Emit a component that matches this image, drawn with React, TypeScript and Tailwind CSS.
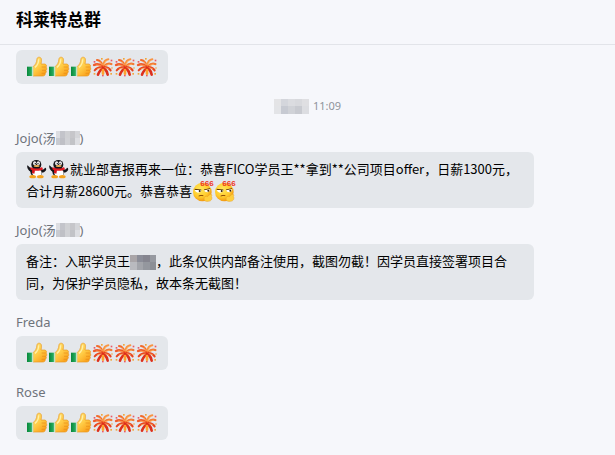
import type { ReactNode } from "react";

const icon = "inline-block size-[22px] align-top";

function ThumbsUp() {
  return (
    <svg viewBox="0 0 66 66" className={icon} role="img" aria-label="赞">
      <defs>
        <linearGradient id="hand" x1="0" y1="0" x2="0.7" y2="1">
          <stop offset="0" stopColor="#ffe27a" />
          <stop offset="0.55" stopColor="#ffcb45" />
          <stop offset="1" stopColor="#fa9f1a" />
        </linearGradient>
        <linearGradient id="cuff" x1="0" y1="0" x2="1" y2="0">
          <stop offset="0" stopColor="#07883a" />
          <stop offset="0.7" stopColor="#25a95d" />
          <stop offset="1" stopColor="#6fcb95" />
        </linearGradient>
      </defs>
      <path d="M21 32 C27 28 32 21 33 8 C34 2 45 2 46 9 C47 15 46 20 45 24 L56 24 C62 25 63 31 60 33 C63 36 63 41 60 43 C62 47 61 50 58 52 C58 57 56 60 50 60 L21 60 Z" fill="url(#hand)" stroke="#e8981f" strokeWidth="2" />
      <path d="M47 33 H59 M48 43 H59 M47 52 H57" stroke="#e58d18" strokeWidth="2" fill="none" />
      <path d="M38 10 C38 21 34 29 27 34" stroke="#fff0a8" strokeWidth="4" fill="none" />
      <rect x="3" y="32" width="17" height="28" fill="url(#cuff)" />
      <rect x="19" y="32" width="3" height="28" fill="#d5efd9" />
    </svg>
  );
}

function Firework() {
  return (
    <svg viewBox="0 0 66 66" className={icon} role="img" aria-label="烟花">
      <g fill="none" strokeLinecap="round">
        <path d="M32 30 C29 19 24 13 15 12" stroke="#f26a2a" strokeWidth="6" />
        <path d="M33 29 C35 17 41 11 49 10" stroke="#f99443" strokeWidth="6" />
        <path d="M31 31 C22 24 14 23 6 27" stroke="#ef5a2a" strokeWidth="7" />
        <path d="M36 31 C43 23 50 21 58 24" stroke="#f47a34" strokeWidth="7" />
        <path d="M30 33 C20 33 13 37 8 43" stroke="#e8461f" strokeWidth="6" />
        <path d="M37 33 C46 33 52 37 56 43" stroke="#e8461f" strokeWidth="6" />
        <path d="M31 36 C25 43 20 49 18 56" stroke="#dd2f1c" strokeWidth="8" />
        <path d="M36 36 C42 42 46 49 47 56" stroke="#dd2f1c" strokeWidth="8" />
        <path d="M33 42 V53" stroke="#ffa12e" strokeWidth="8" />
        <path d="M30 26 L24 17 M36 25 L43 15 M27 30 L14 27 M40 29 L52 25 M28 36 L16 39 M39 35 L49 38" stroke="#ffbd6a" strokeWidth="2" />
      </g>
      <g fill="#ea5868">
        <rect x="5" y="15" width="5" height="5" />
        <rect x="56" y="11" width="5" height="5" />
        <rect x="30" y="57" width="5" height="4" />
      </g>
      <g fill="#f3a63a">
        <rect x="27" y="6" width="5" height="5" />
        <rect x="58" y="34" width="4" height="4" />
        <rect x="5" y="51" width="5" height="5" />
        <rect x="55" y="51" width="5" height="5" />
      </g>
    </svg>
  );
}

function Penguin() {
  return (
    <svg viewBox="0 0 66 66" className={icon} role="img" aria-label="企鹅">
      <path d="M16 30 C9 29 7 23 4 22 C2 29 7 38 15 42 Z" fill="#15151a" />
      <path d="M45 34 C52 36 55 33 57 29 C61 29 62 35 59 38 C55 43 49 44 45 43 Z" fill="#15151a" />
      <ellipse cx="31" cy="41" rx="18" ry="16" fill="#15151a" />
      <ellipse cx="33" cy="45" rx="14" ry="12" fill="#fff" />
      <ellipse cx="20" cy="56" rx="10" ry="5" fill="#f5a21c" />
      <ellipse cx="43" cy="56" rx="10" ry="5" fill="#f5a21c" />
      <ellipse cx="31" cy="20" rx="15" ry="14" fill="#15151a" />
      <ellipse cx="26" cy="16" rx="5" ry="6" fill="#e9e9ec" />
      <ellipse cx="37" cy="16" rx="5" ry="6" fill="#e9e9ec" />
      <circle cx="28" cy="17" r="2" fill="#111" />
      <circle cx="36" cy="17" r="2" fill="#111" />
      <ellipse cx="32" cy="24" rx="9" ry="3" fill="#f0b45a" />
      <path d="M14 27 C24 33 40 33 48 27 L51 34 C42 40 23 40 13 34 Z" fill="#e31b23" />
      <path d="M18 36 L27 37 L25 47 L18 45 Z" fill="#d3141c" />
    </svg>
  );
}

function TripleSix() {
  return (
    <svg viewBox="0 0 66 66" className={icon} role="img" aria-label="666">
      <defs>
        <radialGradient id="face" cx="0.4" cy="0.35" r="0.7">
          <stop offset="0" stopColor="#ffe95e" />
          <stop offset="0.6" stopColor="#ffcb2c" />
          <stop offset="1" stopColor="#ee8c0f" />
        </radialGradient>
      </defs>
      <circle cx="31" cy="36" r="28" fill="url(#face)" />
      <path d="M8 28 L28 30 M36 30 L54 26" stroke="#5b3307" strokeWidth="3" />
      <path d="M8 30 H28 Q26 38 18 38 Q10 37 8 30 Z M36 31 L54 28 Q54 36 46 37 Q38 37 36 31 Z" fill="#fff" />
      <circle cx="23" cy="33" r="3" fill="#3b2206" />
      <circle cx="49" cy="32" r="3" fill="#3b2206" />
      <path d="M20 48 Q27 45 34 47" stroke="#8e4b08" strokeWidth="3" fill="none" />
      <path d="M36 57 C36 50 41 47 46 50 L54 43 C59 41 61 46 58 49 C62 54 59 64 49 64 C41 65 36 62 36 57 Z" fill="#ffcf3c" stroke="#e9a024" strokeWidth="1.5" />
      <text x="25" y="18" fontFamily="Liberation Sans, sans-serif" fontSize="24" fontWeight="700" fill="#ee3524">666</text>
    </svg>
  );
}

function Mosaic({ colors, className }: { colors: string[]; className: string }) {
  return (
    <span aria-hidden="true" className={`inline-grid grid-rows-2 overflow-hidden ${className}`}>
      {colors.map((color, i) => (
        <span key={i} style={{ backgroundColor: color }} />
      ))}
    </span>
  );
}

const nameMosaic = ["#dcdde1", "#c3c4ca", "#cfd0d3", "#c6c6ca", "#d4d5d9", "#c9cbd1", "#bfc0c6", "#d0d1d5", "#c2c3c7", "#dddee2"];
const timeMosaic = ["#e4e4e6", "#d4d6dc", "#dbdce0", "#d8d9dd", "#dfdfe2", "#e3e4e7", "#c7cad2", "#d0d2d7", "#c8cad0", "#dcdde1"];
const wordMosaic = ["#a9a5a8", "#8b8d98", "#85858f", "#9699a0", "#b9babf", "#a2a4aa", "#94979e", "#8c8f96"];

function Message({ name, masked, children }: { name?: string; masked?: boolean; children: ReactNode }) {
  return (
    <article className="flex flex-col items-start">
      {name && (
        <h2 className="mb-1 flex h-5 items-center text-[13px] leading-5 text-[#6f747b]">
          {name}
          {masked && (
            <>
              <Mosaic colors={nameMosaic} className="h-[14px] w-6 grid-cols-5" />)
            </>
          )}
        </h2>
      )}
      <div className="max-w-[518px] rounded-md bg-[#e4e7eb] px-[10px] py-[6px] font-['Noto_Sans_CJK_SC',sans-serif] text-[13px] leading-[22px] text-black">
        {children}
      </div>
    </article>
  );
}

function Cheer() {
  return (
    <p className="flex w-[132px]">
      <ThumbsUp />
      <ThumbsUp />
      <ThumbsUp />
      <Firework />
      <Firework />
      <Firework />
    </p>
  );
}

export default function App() {
  return (
    <div className="min-h-screen bg-[#f6f7fb] font-['Noto_Sans','Noto_Sans_CJK_SC',sans-serif]">
      <header className="flex h-[45px] items-center border-b border-[#e2e4e9] px-4 pb-1">
        <h1 className="text-[17px] leading-6 font-bold text-black">科莱特总群</h1>
      </header>
      <main className="flex flex-col gap-3 px-4 pt-[5px] pb-[15px]">
        <Message>
          <Cheer />
        </Message>
        <div className="flex h-5 items-center justify-center gap-1 text-[11px] text-[#8f949c]">
          <Mosaic colors={timeMosaic} className="h-[15px] w-[35px] grid-cols-5" />
          <time>11:09</time>
        </div>
        <Message name="Jojo(汤" masked>
          <p>
            <Penguin />
            <Penguin />
            就业部喜报再来一位：恭喜FICO学员王**拿到**公司项目offer，日薪1300元，合计月薪28600元。恭喜恭喜
            <TripleSix />
            <TripleSix />
          </p>
        </Message>
        <Message name="Jojo(汤" masked>
          <p>
            备注：入职学员王
            <Mosaic colors={wordMosaic} className="h-[15px] w-[26px] grid-cols-4 align-middle" />
            ，此条仅供内部备注使用，截图勿截！因学员直接签署项目合同，为保护学员隐私，故本条无截图！
          </p>
        </Message>
        <Message name="Freda">
          <Cheer />
        </Message>
        <Message name="Rose">
          <Cheer />
        </Message>
      </main>
    </div>
  );
}
